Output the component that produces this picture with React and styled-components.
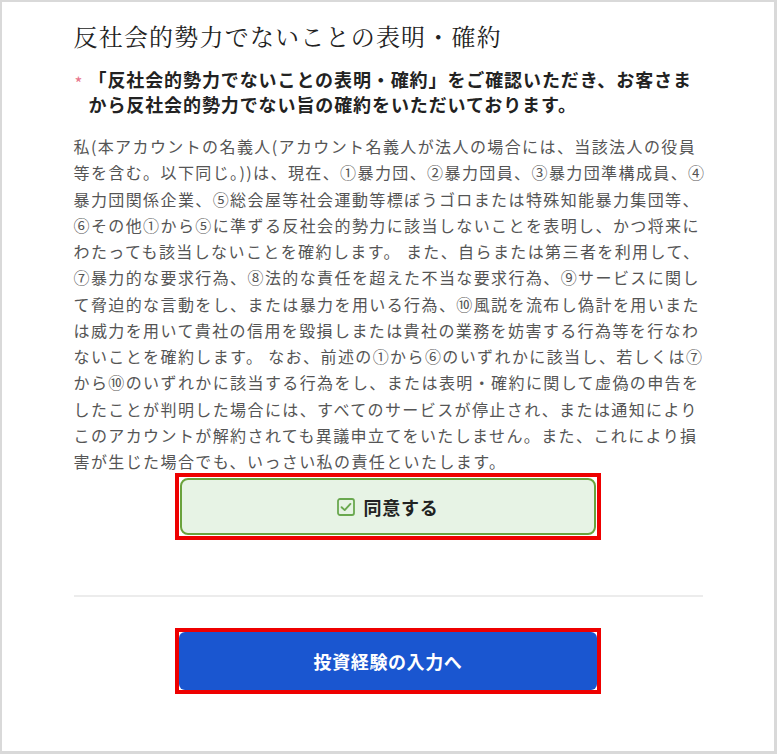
import React from "react";
import styled, { createGlobalStyle } from "styled-components";

const GlobalStyle = createGlobalStyle`
  html, body {
    margin: 0;
    padding: 0;
    background: #ffffff;
  }
  body {
    font-family: "Noto Sans CJK JP", "Noto Sans", sans-serif;
  }
`;

const Frame = styled.div`
  box-sizing: border-box;
  width: 777px;
  height: 754px;
  border: 2px solid #d9d9d9;
  border-right-width: 3px;
  border-bottom-width: 3px;
  background: #ffffff;
  padding-top: 17px;
`;

const Content = styled.div`
  width: 629px;
  margin: 0 auto;
  display: flex;
  flex-direction: column;
`;

const Title = styled.h1`
  margin: 0;
  font-family: "Noto Serif CJK JP", "Noto Sans CJK JP", serif;
  font-size: 24px;
  font-weight: 400;
  line-height: 34px;
  letter-spacing: 1.2px;
  color: #222222;
  white-space: nowrap;
`;

const Notice = styled.div`
  display: flex;
  align-items: flex-start;
  margin-top: 14px;
`;

const Mark = styled.span`
  width: 14px;
  flex: none;
  font-size: 17px;
  line-height: 25px;
  color: #e8768c;
  padding-left: 1px;
  transform: translateY(3px);
`;

const NoticeText = styled.p`
  margin: 0;
  font-size: 18px;
  font-weight: 700;
  line-height: 25px;
  letter-spacing: 0.9px;
  color: #222222;
  white-space: nowrap;
`;

const Body = styled.div`
  margin-top: 16px;
  font-size: 16px;
  line-height: 26.25px;
  letter-spacing: 1.4px;
  color: #555555;
`;

const Line = styled.div`
  white-space: nowrap;
`;

const Highlight = styled.div`
  align-self: center;
  display: flex;
  border: 4px solid #ee0000;
  padding: ${({ $pad }) => $pad || 0};
  margin-top: ${({ $top }) => $top || 0};
`;

const AgreeButton = styled.button`
  box-sizing: border-box;
  width: 416px;
  height: 57px;
  display: flex;
  align-items: center;
  justify-content: center;
  gap: 8px;
  background: #e7f3e5;
  border: 2px solid #6aa23c;
  border-radius: 8px;
  font-family: inherit;
  font-size: 18px;
  font-weight: 700;
  letter-spacing: 0.8px;
  color: #222222;
  cursor: pointer;
`;

const NextButton = styled.button`
  box-sizing: border-box;
  width: 418px;
  height: 58px;
  display: flex;
  align-items: center;
  justify-content: center;
  background: #1a56d0;
  border: none;
  border-radius: 6px;
  font-family: inherit;
  font-size: 18px;
  font-weight: 700;
  letter-spacing: 0.6px;
  color: #ffffff;
  cursor: pointer;
`;

const Divider = styled.hr`
  width: 100%;
  margin: 55px 0 0;
  border: none;
  border-top: 2px solid #ececec;
`;

const CheckIcon = () => (
  <svg width="18" height="18" viewBox="0 0 18 18" fill="none">
    <rect x="1" y="1" width="16" height="16" rx="2" stroke="#6aa84f" strokeWidth="1.8" />
    <path d="M4.6 9.2 L7.7 12.1 L13.4 5.9" stroke="#6aa84f" strokeWidth="1.9" strokeLinecap="round" strokeLinejoin="round" />
  </svg>
);

const lines = [
  "私(本アカウントの名義人(アカウント名義人が法人の場合には、当該法人の役員",
  "等を含む。以下同じ。))は、現在、①暴力団、②暴力団員、③暴力団準構成員、④",
  "暴力団関係企業、⑤総会屋等社会運動等標ぼうゴロまたは特殊知能暴力集団等、",
  "⑥その他①から⑤に準ずる反社会的勢力に該当しないことを表明し、かつ将来に",
  "わたっても該当しないことを確約します。 また、自らまたは第三者を利用して、",
  "⑦暴力的な要求行為、⑧法的な責任を超えた不当な要求行為、⑨サービスに関し",
  "て脅迫的な言動をし、または暴力を用いる行為、⑩風説を流布し偽計を用いまた",
  "は威力を用いて貴社の信用を毀損しまたは貴社の業務を妨害する行為等を行なわ",
  "ないことを確約します。 なお、前述の①から⑥のいずれかに該当し、若しくは⑦",
  "から⑩のいずれかに該当する行為をし、または表明・確約に関して虚偽の申告を",
  "したことが判明した場合には、すべてのサービスが停止され、または通知により",
  "このアカウントが解約されても異議申立てをいたしません。また、これにより損",
  "害が生じた場合でも、いっさい私の責任といたします。",
];

const App = () => {
  return (
    <>
      <GlobalStyle />
      <Frame>
        <Content>
          <Title>反社会的勢力でないことの表明・確約</Title>
          <Notice>
            <Mark>*</Mark>
            <NoticeText>
              「反社会的勢力でないことの表明・確約」をご確認いただき、お客さま
              <br />
              から反社会的勢力でない旨の確約をいただいております。
            </NoticeText>
          </Notice>
          <Body>
            {lines.map((text) => (
              <Line key={text}>{text}</Line>
            ))}
          </Body>
          <Highlight $pad="1px" $top="-1px">
            <AgreeButton type="button">
              <CheckIcon />
              同意する
            </AgreeButton>
          </Highlight>
          <Divider />
          <Highlight $top="31px">
            <NextButton type="button">投資経験の入力へ</NextButton>
          </Highlight>
        </Content>
      </Frame>
    </>
  );
};

export default App;
